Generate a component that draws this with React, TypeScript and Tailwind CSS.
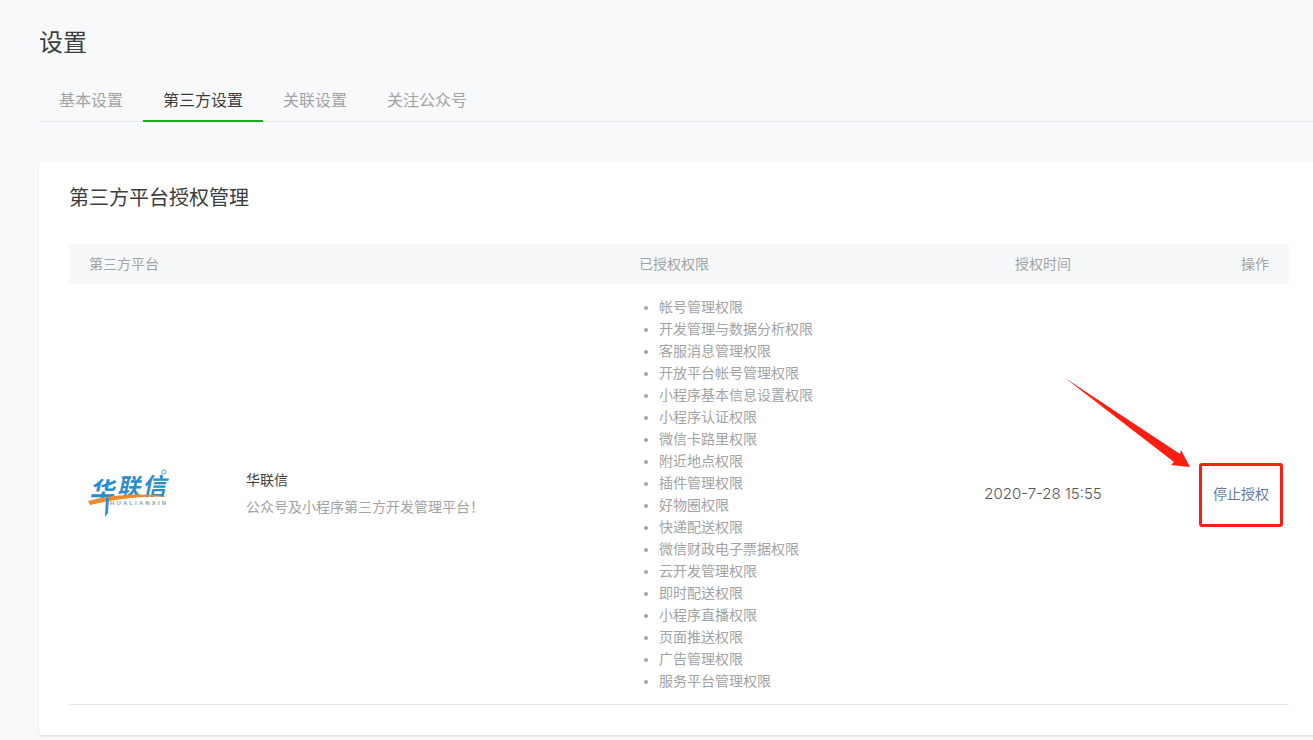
const permissions = [
  '帐号管理权限',
  '开发管理与数据分析权限',
  '客服消息管理权限',
  '开放平台帐号管理权限',
  '小程序基本信息设置权限',
  '小程序认证权限',
  '微信卡路里权限',
  '附近地点权限',
  '插件管理权限',
  '好物圈权限',
  '快递配送权限',
  '微信财政电子票据权限',
  '云开发管理权限',
  '即时配送权限',
  '小程序直播权限',
  '页面推送权限',
  '广告管理权限',
  '服务平台管理权限',
];

const tabs = ['基本设置', '第三方设置', '关联设置', '关注公众号'];

const Logo = () => (
  <svg width="84" height="52" viewBox="0 0 84 52" className="shrink-0">
    <g fill="#2a8dcf" fontFamily='"Noto Sans CJK SC", sans-serif' fontWeight="700">
      <text x="3" y="32" fontSize="25" transform="skewX(-12) translate(6 0)">华</text>
      <text x="30" y="27" fontSize="23" transform="skewX(-12) translate(6 0)">联</text>
      <text x="55" y="27" fontSize="24" transform="skewX(-12) translate(6 0)">信</text>
    </g>
    <path d="M1 33 C 22 27, 58 24, 81 29 C 58 27, 28 31, 3 37 Z" fill="#ee8a2a" />
    <path d="M19 30 L18 49 L21 45 L22 30 Z" fill="#2a8dcf" />
    <text x="23" y="37" fontSize="6" fontFamily='"Liberation Sans", sans-serif' fontWeight="700" fill="#86a3b8" textLength="56">
      HUALIANXIN
    </text>
    <circle cx="77" cy="4" r="2" fill="none" stroke="#2a8dcf" strokeWidth="0.8" />
  </svg>
);

export default function App() {
  return (
    <div className="relative h-[740px] w-[1313px] overflow-hidden bg-[#f8f9fb] pl-[39px] font-['Roboto','Noto_Sans_CJK_SC',sans-serif]">
      <h1 className="pt-6 text-[24px] leading-[38px] text-[#3d3d3d]">设置</h1>

      <div className="mt-[22px] flex h-[38px] border-b border-[#e4e7ec]">
        {tabs.map((tab, i) => (
          <div
            key={tab}
            className={
              i === 1
                ? 'h-[38px] border-b-2 border-[#1aad19] px-5 text-[16px] leading-[34px] text-[#3d3d3d]'
                : 'h-[38px] px-5 text-[16px] leading-[34px] text-[#a3a3a3]'
            }
          >
            {tab}
          </div>
        ))}
      </div>

      <div className="mt-10 h-[573px] w-[1280px] rounded-[4px] bg-white px-[30px] shadow-[0_1px_2px_rgba(0,0,0,0.12)]">
        <h2 className="pt-[21px] text-[20px] leading-[30px] text-[#3d3d3d]">第三方平台授权管理</h2>

        <div className="mt-[31px] grid h-10 grid-cols-[550px_344px_160px_166px] items-center bg-[#f6f8f9] text-[14px] text-[#a3a3a3]">
          <div className="pl-5">第三方平台</div>
          <div className="pl-5">已授权权限</div>
          <div className="text-center">授权时间</div>
          <div className="pr-5 text-right">操作</div>
        </div>

        <div className="grid h-[421px] grid-cols-[550px_344px_160px_166px] items-center border-b border-[#e7e7e7]">
          <div className="flex items-center pl-[18px]">
            <Logo />
            <div className="ml-[75px] mb-[2px]">
              <div className="text-[14px] leading-[24px] text-[#3d3d3d]">华联信</div>
              <div className="mt-[3px] text-[14px] leading-[24px] text-[#a3a3a3]">公众号及小程序第三方开发管理平台！</div>
            </div>
          </div>
          <ul className="list-disc pl-10 text-[14px] leading-[22px] text-[#a3a3a3]">
            {permissions.map((p) => (
              <li key={p}>{p}</li>
            ))}
          </ul>
          <div className="text-center font-['Inter',sans-serif] text-[15px] font-light text-[#555555]">2020-7-28 15:55</div>
          <div className="pr-5 text-right text-[14px] text-[#6478a0]">停止授权</div>
        </div>
      </div>

      {/* red annotations drawn over the page */}
      <div className="absolute left-[1199px] top-[463px] h-[64px] w-[84px] rounded-[3px] border-[3px] border-[#fb1f12]" />
      <svg className="absolute left-[1060px] top-[375px]" width="135" height="95" viewBox="1060 375 135 95">
        <polygon points="1065,378 1180,454 1181,450 1190,467 1171,465 1174,462" fill="#fb1f12" />
      </svg>
    </div>
  );
}
